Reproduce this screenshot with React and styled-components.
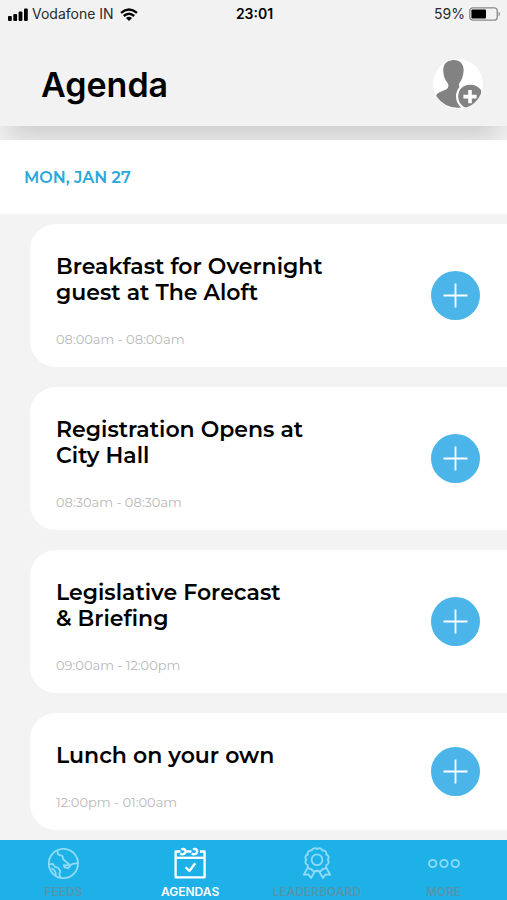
import React from "react";
import styled, { createGlobalStyle } from "styled-components";

const GlobalStyle = createGlobalStyle`
  * {
    box-sizing: border-box;
  }
  body {
    margin: 0;
    background: #f3f3f3;
    color: #000;
    font-family: Montserrat, Inter, sans-serif;
  }
`;

const Page = styled.div`
  display: flex;
  flex-direction: column;
  min-height: 100vh;
`;

const Header = styled.header`
  margin-bottom: 14px;
  background: #f2f2f2;
  box-shadow: 0 20px 28px -8px rgba(0, 0, 0, 0.17);
  font-family: Inter, sans-serif;
`;

const StatusBar = styled.div`
  display: grid;
  grid-template-columns: 1fr auto 1fr;
  align-items: center;
  height: 28px;
  padding: 0 6px 0 8px;
  font-size: 14px;
  line-height: 20px;
`;

const StatusGroup = styled.div`
  display: flex;
  align-items: center;
  justify-content: ${(props) => (props.$end ? "flex-end" : "flex-start")};
  gap: 4px;
  color: #2a2a2a;
`;

const Clock = styled.time`
  font-weight: 600;
`;

const TitleBar = styled.div`
  display: flex;
  align-items: center;
  justify-content: space-between;
  padding: 31px 24px 15px 41px;
`;

const Title = styled.h1`
  margin: 0;
  font-size: 34px;
  font-weight: 600;
  line-height: 52px;
`;

const ProfileButton = styled.button`
  display: flex;
  align-self: flex-start;
  overflow: hidden;
  padding: 0;
  border: 0;
  border-radius: 50%;
  background: #fff;
  cursor: pointer;
`;

const DateBar = styled.h2`
  position: relative;
  margin: 0;
  padding: 28px 24px 26px;
  background: #fff;
  color: #2ba9dc;
  font-size: 16px;
  font-weight: 600;
  line-height: 20px;
`;

const List = styled.ul`
  display: flex;
  flex: 1;
  flex-direction: column;
  gap: 20px;
  margin: 0;
  padding: 10px 0 10px 30px;
  list-style: none;
`;

const Card = styled.li`
  display: flex;
  align-items: center;
  justify-content: space-between;
  padding: 30px 27px 20px 26px;
  border-radius: 26px 0 0 26px;
  background: #fff;
`;

const CardText = styled.div`
  display: flex;
  flex-direction: column;
  gap: 25px;
`;

const CardTitle = styled.h3`
  max-width: 290px;
  margin: 0;
  font-size: 22px;
  font-weight: 600;
  line-height: 26px;
  white-space: pre-line;
`;

const CardTime = styled.p`
  margin: 0;
  color: #b9b9b9;
  font-size: 13px;
  font-weight: 400;
  line-height: 16px;
`;

const AddButton = styled.button`
  display: flex;
  flex: none;
  align-items: center;
  justify-content: center;
  width: 49px;
  height: 49px;
  margin-top: -10px;
  padding: 0;
  border: 0;
  border-radius: 50%;
  background: #4bb4e8;
  cursor: pointer;
`;

const TabBar = styled.nav`
  position: sticky;
  bottom: 0;
  display: grid;
  grid-template-columns: repeat(4, 1fr);
  height: 60px;
  background: #1eb1e8;
`;

const Tab = styled.a`
  display: flex;
  flex-direction: column;
  align-items: center;
  gap: 5px;
  padding-top: 7px;
  color: ${(props) => (props.$active ? "#fff" : "#8fdcf8")};
  font-family: Inter, sans-serif;
  font-size: 12px;
  font-weight: 600;
  line-height: 16px;
  text-decoration: none;
`;

const TabLabel = styled.span`
  color: ${(props) => (props.$active ? "#fff" : "#5495ae")};
`;

const SignalIcon = () => (
  <svg width="20" height="13" viewBox="0 0 20 13" fill="#000" aria-hidden="true">
    <rect x="0" y="8" width="3.8" height="5" rx="1" />
    <rect x="5.3" y="6" width="3.8" height="7" rx="1" />
    <rect x="10.6" y="3.5" width="3.8" height="9.5" rx="1" />
    <rect x="16" y="0.5" width="3.8" height="12.5" rx="1" />
  </svg>
);

const WifiIcon = () => (
  <svg width="20" height="13" viewBox="-2 0 20 13" fill="none" stroke="#000" strokeWidth="2.4" aria-hidden="true">
    <path d="M1 4.8Q9-2 17 4.8" />
    <path d="M3.8 8Q9 3.4 14.2 8" />
    <path d="M6 10.1Q9 7.6 12 10.1L9 12.9Z" fill="#000" stroke="none" />
  </svg>
);

const BatteryIcon = () => (
  <svg width="32" height="14" viewBox="0 0 32 14" aria-hidden="true">
    <rect x="0.8" y="0.8" width="27.4" height="12.4" rx="3" fill="none" stroke="#8b8b8b" strokeWidth="1.3" />
    <rect x="2.4" y="2.4" width="14.6" height="9.2" rx="1" fill="#000" />
    <path d="M29.6 4.4Q32 7 29.6 9.6Z" fill="#777" />
  </svg>
);

const ProfileIcon = () => (
  <svg width="50" height="50" viewBox="0 0 50 50" aria-hidden="true">
    <g fill="#828282">
      <path d="M20.5 1C27.5 1 31 5.5 30.6 12C30.3 17.5 28.5 21.5 26.2 24.2C25.8 27 26 28.5 28 29.4L32 31L28 48.5Q13 50.5 3 37Q3.5 34.5 6.5 33.3L13 30.5C15.5 29.2 16 27 14.8 24.2C12 21 10.4 17 10.2 12C10 5 14 1 20.5 1Z" />
      <circle cx="37" cy="37.5" r="14" fill="#fff" />
      <path d="M37 25.8Q44.5 25.8 48.3 31.5Q48.5 36 46 40Q42.5 46.5 33 49Q25.2 45.5 25.2 37.5Q25.7 26.3 37 25.8Z" />
    </g>
    <path d="M37 31V44.2M30.4 37.6H43.6" stroke="#fff" strokeWidth="3.6" />
  </svg>
);

const PlusIcon = () => (
  <svg width="25" height="25" viewBox="0 0 25 25" stroke="#fff" strokeWidth="1.8" aria-hidden="true">
    <path d="M12.5 0.5V24.5M0.5 12.5H24.5" />
  </svg>
);

const TabIcon = ({ children }) => (
  <svg
    width="32"
    height="32"
    viewBox="0 0 32 32"
    fill="none"
    stroke="currentColor"
    strokeWidth="1.8"
    strokeLinejoin="round"
    aria-hidden="true"
  >
    {children}
  </svg>
);

const GlobeIcon = () => (
  <TabIcon>
    <circle cx="16.4" cy="16.5" r="14.6" />
    <path d="M10.2 3.2L11 7.4L15.4 9L16.4 12.4L20.4 16L22.2 17.2L20.2 18.4L16.8 18.2L17.6 20.4L21.2 21.2L23.4 18.2L26 16.8L30.6 16.2" />
    <path d="M2.2 17.4L5.6 16.8L8 19.8L11.4 21L13.2 24L12.4 27L13.4 30.4" />
    <path d="M4.4 21.4L6.6 22.6L8.6 25.4L8.8 28.6" />
  </TabIcon>
);

const CalendarIcon = () => (
  <TabIcon>
    <g strokeWidth="2.3">
      <path d="M6.4 4.5H1.6V30.3H30.6V4.5H26M12.4 4.5H17.4" />
      <path d="M1.6 10.8H30.6" />
      <path d="M6.2 6.4Q8 8.2 10.2 6.8Q12.4 5 11.2 3Q9.6 1.2 7.4 2.6" />
      <path d="M17.8 6.4Q19.6 8.2 21.8 6.8Q24 5 22.8 3Q21.2 1.2 19 2.6" />
      <path d="M11.6 20.2L15.4 24L21.2 16.2" />
    </g>
  </TabIcon>
);

const scallops = Array.from({ length: 12 }, (_, i) => {
  const a = ((i + 1) * Math.PI) / 6;
  return `A3.1 3.1 0 0 1 ${16 + 10.6 * Math.sin(a)} ${12.8 - 10.6 * Math.cos(a)}`;
}).join(" ");

const AwardIcon = () => (
  <TabIcon>
    <path d={`M16 2.2 ${scallops}Z`} />
    <circle cx="16" cy="12.8" r="5.4" />
    <path d="M7.2 20L2.8 27.6L7.6 27.4L10 31L14.6 23.2M24.8 20L29.2 27.6L24.4 27.4L22 31L17.4 23.2" />
  </TabIcon>
);

const MoreIcon = () => (
  <TabIcon>
    <circle cx="4.7" cy="16.5" r="3.7" />
    <circle cx="16" cy="16.5" r="3.7" />
    <circle cx="27.3" cy="16.5" r="3.7" />
  </TabIcon>
);

const sessions = [
  { title: "Breakfast for Overnight\nguest at The Aloft", time: "08:00am - 08:00am" },
  { title: "Registration Opens at\nCity Hall", time: "08:30am - 08:30am" },
  { title: "Legislative Forecast\n& Briefing", time: "09:00am - 12:00pm" },
  { title: "Lunch on your own", time: "12:00pm - 01:00am" },
];

const tabs = [
  { label: "FEEDS", Icon: GlobeIcon },
  { label: "AGENDAS", Icon: CalendarIcon, active: true },
  { label: "LEADERBOARD", Icon: AwardIcon },
  { label: "MORE", Icon: MoreIcon },
];

export default function App() {
  return (
    <Page>
      <GlobalStyle />
      <Header>
        <StatusBar>
          <StatusGroup>
            <SignalIcon />
            <span>Vodafone IN</span>
            <WifiIcon />
          </StatusGroup>
          <Clock>23:01</Clock>
          <StatusGroup $end>
            <span>59%</span>
            <BatteryIcon />
          </StatusGroup>
        </StatusBar>
        <TitleBar>
          <Title>Agenda</Title>
          <ProfileButton aria-label="Add profile">
            <ProfileIcon />
          </ProfileButton>
        </TitleBar>
      </Header>
      <DateBar>MON, JAN 27</DateBar>
      <List>
        {sessions.map((session) => (
          <Card key={session.title}>
            <CardText>
              <CardTitle>{session.title}</CardTitle>
              <CardTime>{session.time}</CardTime>
            </CardText>
            <AddButton aria-label="Add to agenda">
              <PlusIcon />
            </AddButton>
          </Card>
        ))}
      </List>
      <TabBar>
        {tabs.map(({ label, Icon, active }) => (
          <Tab key={label} href="#" $active={active}>
            <Icon />
            <TabLabel $active={active}>{label}</TabLabel>
          </Tab>
        ))}
      </TabBar>
    </Page>
  );
}
